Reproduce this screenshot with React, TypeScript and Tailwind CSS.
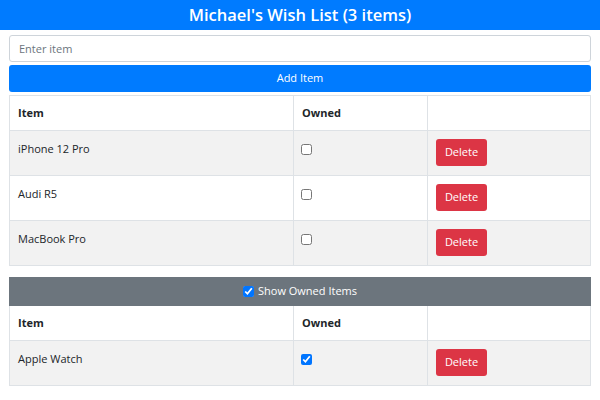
import React from "react";

type Item = { name: string; owned: boolean };

const wishItems: Item[] = [
  { name: "iPhone 12 Pro", owned: false },
  { name: "Audi R5", owned: false },
  { name: "MacBook Pro", owned: false },
];

const ownedItems: Item[] = [{ name: "Apple Watch", owned: true }];

function ItemTable({ items, banner }: { items: Item[]; banner?: React.ReactNode }) {
  return (
    <table className="w-full table-fixed border-collapse text-[11px] text-[#212529]">
      <colgroup>
        <col className="w-[284px]" />
        <col className="w-[134px]" />
        <col />
      </colgroup>
      <thead>
        {banner && (
          <tr>
            <th colSpan={3} className="h-[28px] bg-[#6c757d] border border-[#6c757d] p-0 font-normal text-white">
              {banner}
            </th>
          </tr>
        )}
        <tr className="h-[35px]">
          <th className="border border-[#dee2e6] px-[8px] text-left font-bold">Item</th>
          <th className="border border-[#dee2e6] px-[8px] text-left font-bold">Owned</th>
          <th className="border border-[#dee2e6]"></th>
        </tr>
      </thead>
      <tbody>
        {items.map((item, i) => (
          <tr key={item.name} className={i % 2 === 0 ? "h-[45px] bg-[#f2f2f2]" : "h-[45px] bg-white"}>
            <td className="border border-[#dee2e6] px-[8px] pt-[9px] align-top leading-[18px]">{item.name}</td>
            <td className="border border-[#dee2e6] px-[7px] pt-[9px] align-top leading-[18px]">
              <input
                type="checkbox"
                defaultChecked={item.owned}
                className="m-0 mt-[4px] h-[11px] w-[11px] align-top accent-[#0075ff]"
              />
            </td>
            <td className="border border-[#dee2e6] px-[8px] py-[8px] align-top">
              <button className="h-[27px] w-[51px] rounded-[3px] bg-[#dc3545] text-[11px] text-white">
                Delete
              </button>
            </td>
          </tr>
        ))}
      </tbody>
    </table>
  );
}

export default function App() {
  return (
    <div className="min-h-[400px] bg-white font-['Open_Sans','Noto_Sans',sans-serif]">
      <header className="flex h-[30px] items-center justify-center bg-[#007bff] text-[16.5px] font-semibold text-white">
        Michael's Wish List (3 items)
      </header>

      <div className="px-[9px]">
        <input
          type="text"
          placeholder="Enter item"
          className="mt-[5px] block h-[27px] w-full rounded-[3px] border border-[#ced4da] px-[9px] text-[11px] outline-none placeholder:text-[#6c757d]"
        />
        <button className="mt-[3px] block h-[27px] w-full rounded-[3px] bg-[#007bff] text-[11px] text-white">
          Add Item
        </button>

        <div className="mt-[3px]">
          <ItemTable items={wishItems} />
        </div>

        <div className="mt-[11px]">
          <ItemTable
            items={ownedItems}
            banner={
              <label className="flex items-center justify-center gap-[4px]">
                <input type="checkbox" defaultChecked className="m-0 h-[11px] w-[11px] accent-[#0075ff]" />
                <span>Show Owned Items</span>
              </label>
            }
          />
        </div>
      </div>
    </div>
  );
}
